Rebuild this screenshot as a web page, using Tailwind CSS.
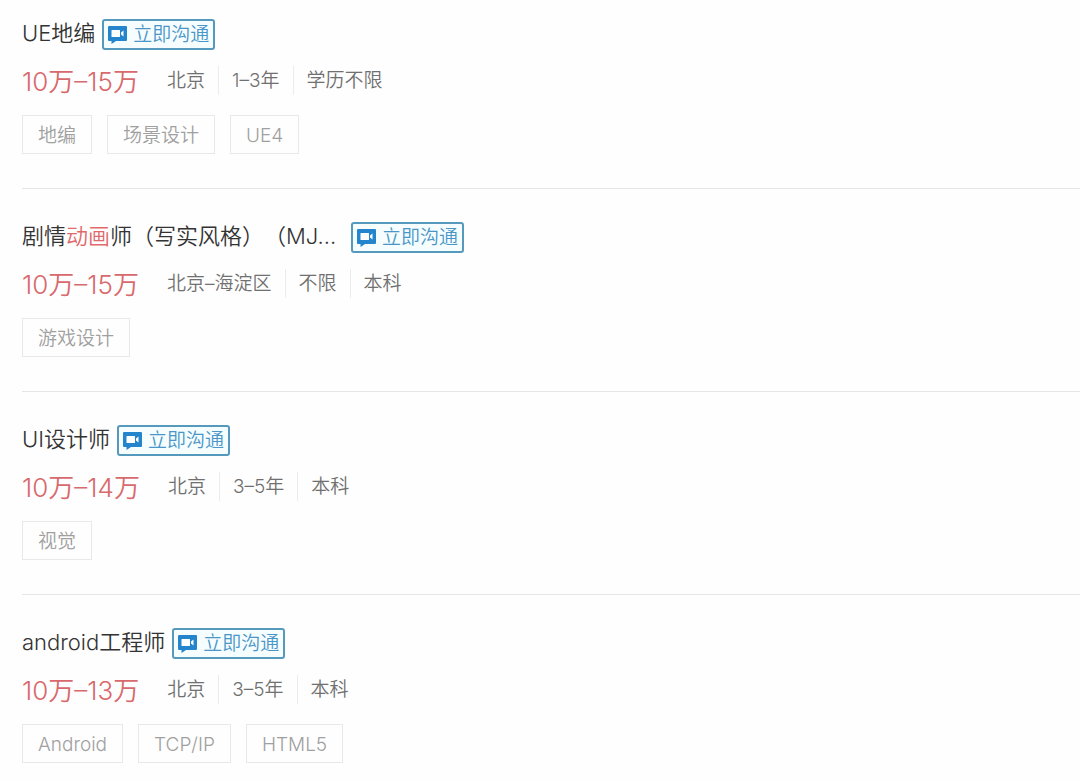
<!DOCTYPE html>
<html lang="zh-CN">
<head>
  <meta charset="UTF-8" />
  <meta name="viewport" content="width=device-width, initial-scale=1.0"/>
  <title>职位列表</title>

  <!-- Tailwind CSS -->
  <script src="https://cdn.jsdelivr.net/npm/@tailwindcss/browser@4"></script>
</head>
<body class="bg-[#fefefe] font-['Inter','Noto_Sans_CJK_SC',sans-serif] font-[350] [text-spacing-trim:space-all]">

  <!-- Shared chat icon -->
  <svg class="hidden" aria-hidden="true">
    <symbol id="chat" viewBox="0 0 19 19">
      <path fill="#2585cc" d="M1 1h17a1 1 0 0 1 1 1v13a1 1 0 0 1-1 1H8l-4.500 3v-3H1a1 1 0 0 1-1-1V2a1 1 0 0 1 1-1z"/>
      <path fill="#fff" d="M4 5h7.500a.5.5 0 0 1 .5.5v6a.5.5 0 0 1-.5.5H4a.5.5 0 0 1-.5-.5v-6A.5.5 0 0 1 4 5zM13 7.500L15.500 5.500v6L13 9.500z"/>
    </symbol>
  </svg>

  <main class="pl-[22px]">
    <!-- UE -->
    <article class="border-b border-[#e6e6e6] pt-[19px] pb-[34px]">
      <div class="flex h-[31px] items-center gap-[7px]">
        <h2 class="pb-[3px] text-[22px] leading-[28px] text-[#333]">UE地编</h2>
        <button type="button" class="flex h-[31px] items-center gap-[6px] rounded-[3px] border-2 border-[#5599bd] bg-[#f6fdff] px-1 text-[19px] leading-[27px] text-[#4a96c8]">
          <svg class="size-[19px]" aria-hidden="true"><use href="#chat"/></svg>立即沟通
        </button>
      </div>
      <div class="mt-4 flex h-[29px] items-center">
        <p class="mr-7 min-w-[117px] pt-[2px] text-[26px] leading-[29px] text-[#d8696d]">10万–15万</p>
        <ul class="flex divide-x divide-[#ececec] text-[19px] leading-[29px] text-[#707070]">
          <li class="pr-[13px]">北京</li>
          <li class="px-[13px]">1–3年</li>
          <li class="pl-[13px]">学历不限</li>
        </ul>
      </div>
      <ul class="mt-5 flex gap-[15px] text-[19px] leading-[35px] text-[#a0a0a0]">
        <li class="border border-[#e8e8e8] px-[15px] pt-[2px]">地编</li>
        <li class="border border-[#e8e8e8] px-[15px] pt-[2px]">场景设计</li>
        <li class="border border-[#e8e8e8] px-[15px] pt-[2px]">UE4</li>
      </ul>
    </article>

    <!-- Animator -->
    <article class="border-b border-[#e6e6e6] pt-[33px] pb-[34px]">
      <div class="flex h-[31px] items-center gap-[7px]">
        <h2 class="w-[322px] truncate pb-[3px] text-[22px] leading-[28px] text-[#333]">剧情<em class="text-[#e0696b] not-italic">动画</em>师（写实风格）（MJ...</h2>
        <button type="button" class="flex h-[31px] items-center gap-[6px] rounded-[3px] border-2 border-[#5599bd] bg-[#f6fdff] px-1 text-[19px] leading-[27px] text-[#4a96c8]">
          <svg class="size-[19px]" aria-hidden="true"><use href="#chat"/></svg>立即沟通
        </button>
      </div>
      <div class="mt-4 flex h-[29px] items-center">
        <p class="mr-7 min-w-[117px] pt-[2px] text-[26px] leading-[29px] text-[#d8696d]">10万–15万</p>
        <ul class="flex divide-x divide-[#ececec] text-[19px] leading-[29px] text-[#707070]">
          <li class="pr-[13px]">北京–海淀区</li>
          <li class="px-[13px]">不限</li>
          <li class="pl-[13px]">本科</li>
        </ul>
      </div>
      <ul class="mt-5 flex gap-[15px] text-[19px] leading-[35px] text-[#a0a0a0]">
        <li class="border border-[#e8e8e8] px-[15px] pt-[2px]">游戏设计</li>
      </ul>
    </article>

    <!-- UI designer -->
    <article class="border-b border-[#e6e6e6] pt-[33px] pb-[34px]">
      <div class="flex h-[31px] items-center gap-[7px]">
        <h2 class="pb-[3px] text-[22px] leading-[28px] text-[#333]">UI设计师</h2>
        <button type="button" class="flex h-[31px] items-center gap-[6px] rounded-[3px] border-2 border-[#5599bd] bg-[#f6fdff] px-1 text-[19px] leading-[27px] text-[#4a96c8]">
          <svg class="size-[19px]" aria-hidden="true"><use href="#chat"/></svg>立即沟通
        </button>
      </div>
      <div class="mt-4 flex h-[29px] items-center">
        <p class="mr-7 min-w-[117px] pt-[2px] text-[26px] leading-[29px] text-[#d8696d]">10万–14万</p>
        <ul class="flex divide-x divide-[#ececec] text-[19px] leading-[29px] text-[#707070]">
          <li class="pr-[13px]">北京</li>
          <li class="px-[13px]">3–5年</li>
          <li class="pl-[13px]">本科</li>
        </ul>
      </div>
      <ul class="mt-5 flex gap-[15px] text-[19px] leading-[35px] text-[#a0a0a0]">
        <li class="border border-[#e8e8e8] px-[15px] pt-[2px]">视觉</li>
      </ul>
    </article>

    <!-- Android -->
    <article class="pt-[33px] pb-4">
      <div class="flex h-[31px] items-center gap-[7px]">
        <h2 class="pb-[3px] text-[22px] leading-[28px] text-[#333]">android工程师</h2>
        <button type="button" class="flex h-[31px] items-center gap-[6px] rounded-[3px] border-2 border-[#5599bd] bg-[#f6fdff] px-1 text-[19px] leading-[27px] text-[#4a96c8]">
          <svg class="size-[19px]" aria-hidden="true"><use href="#chat"/></svg>立即沟通
        </button>
      </div>
      <div class="mt-4 flex h-[29px] items-center">
        <p class="mr-7 min-w-[117px] pt-[2px] text-[26px] leading-[29px] text-[#d8696d]">10万–13万</p>
        <ul class="flex divide-x divide-[#ececec] text-[19px] leading-[29px] text-[#707070]">
          <li class="pr-[13px]">北京</li>
          <li class="px-[13px]">3–5年</li>
          <li class="pl-[13px]">本科</li>
        </ul>
      </div>
      <ul class="mt-5 flex gap-[15px] text-[19px] leading-[35px] text-[#a0a0a0]">
        <li class="border border-[#e8e8e8] px-[15px] pt-[2px]">Android</li>
        <li class="border border-[#e8e8e8] px-[15px] pt-[2px]">TCP/IP</li>
        <li class="border border-[#e8e8e8] px-[15px] pt-[2px]">HTML5</li>
      </ul>
    </article>
  </main>
</body>
</html>
